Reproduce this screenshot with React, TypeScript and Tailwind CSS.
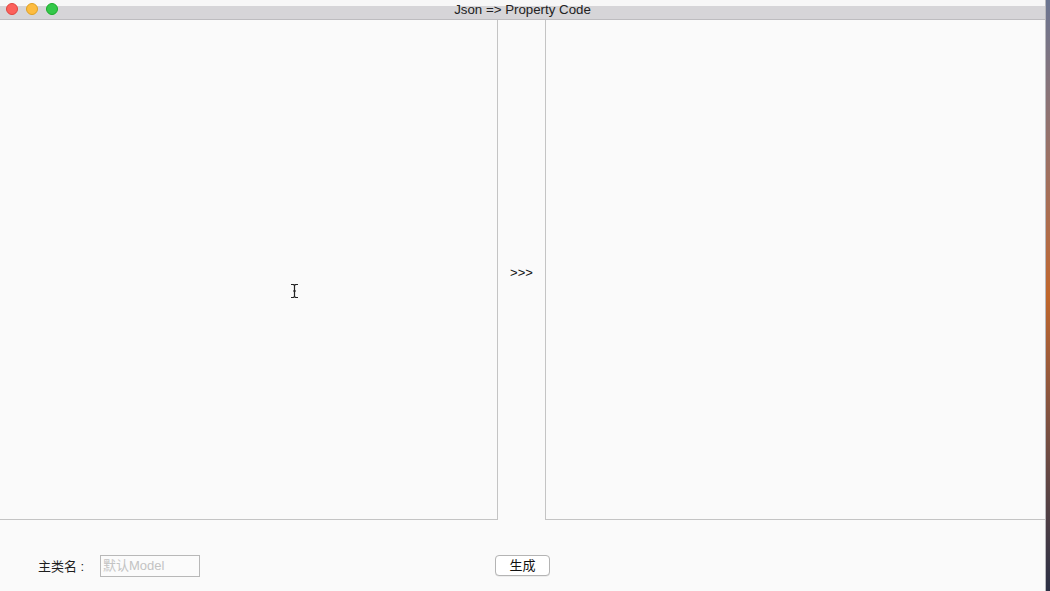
import React from "react";

export default function App() {
  const font = { fontFamily: '"Helvetica Neue", "Liberation Sans", "Noto Sans CJK SC", sans-serif' };
  return (
    <div className="w-[1050px] h-[591px] flex overflow-hidden bg-[#fafafa]" style={font}>
      <div className="w-[1046px] h-full flex flex-col bg-[#fafafa] border-r border-[#b9b9bd]">
        <div className="relative h-[20px] flex flex-col shrink-0">
          <div className="h-[6px] bg-[#f7f7f7]" />
          <div className="h-[13px] bg-[#d6d5d8]" />
          <div className="h-[1px] bg-[#bdbcbf]" />
          <div className="absolute left-[6px] top-[3px] flex gap-[8px]">
            <div className="w-[12px] h-[12px] rounded-full bg-[#fc605b] border border-[#e0443e]" />
            <div className="w-[12px] h-[12px] rounded-full bg-[#fdbc40] border border-[#dea123]" />
            <div className="w-[12px] h-[12px] rounded-full bg-[#34c84a] border border-[#1aab29]" />
          </div>
          <div className="absolute inset-x-0 top-[2px] flex justify-center text-[13.3px] leading-[16px] text-[#222]">
            Json =&gt; Property Code
          </div>
        </div>
        <div className="flex h-[500px] shrink-0">
          <div className="relative w-[498px] border-r border-b border-[#c4c4c4] bg-[#fafafa]">
            <svg className="absolute left-[290px] top-[263px]" width="9" height="16" viewBox="0 0 9 16">
              <path d="M1 1.5h2.5l1 1 1-1H8M4.5 2.5v11M1 14.5h2.5l1-1 1 1H8M3 8h3" stroke="#222" strokeWidth="1.2" fill="none" />
            </svg>
          </div>
          <div className="w-[47px] flex items-center justify-center text-[13px] text-[#111] pt-[6px]">
            &gt;&gt;&gt;
          </div>
          <div className="flex-1 border-l border-b border-[#c4c4c4] bg-[#fafafa]" />
        </div>
        <div className="flex-1 flex items-center pt-[20px]">
          <div className="w-[100px] pl-[38px] pt-[3px] text-[13px] text-[#1e1e1e]">主类名 :</div>
          <div className="w-[100px] h-[22px] border border-[#b8b8b8] bg-[#fbfbfb] flex items-center px-[2px] text-[13px] text-[#c3c3c3]">
            默认Model
          </div>
          <div className="w-[295px]" />
          <div className="w-[55px] h-[21px] rounded-[4px] border border-[#b4b4b4] bg-white flex items-center justify-center text-[13px] text-[#111] shadow-[0_0.5px_0_rgba(0,0,0,0.1)]">
            生成
          </div>
        </div>
      </div>
      <div className="w-[4px] h-full bg-gradient-to-b from-[#6b7591] via-[#c0662a] to-[#2b2f44]" />
    </div>
  );
}
